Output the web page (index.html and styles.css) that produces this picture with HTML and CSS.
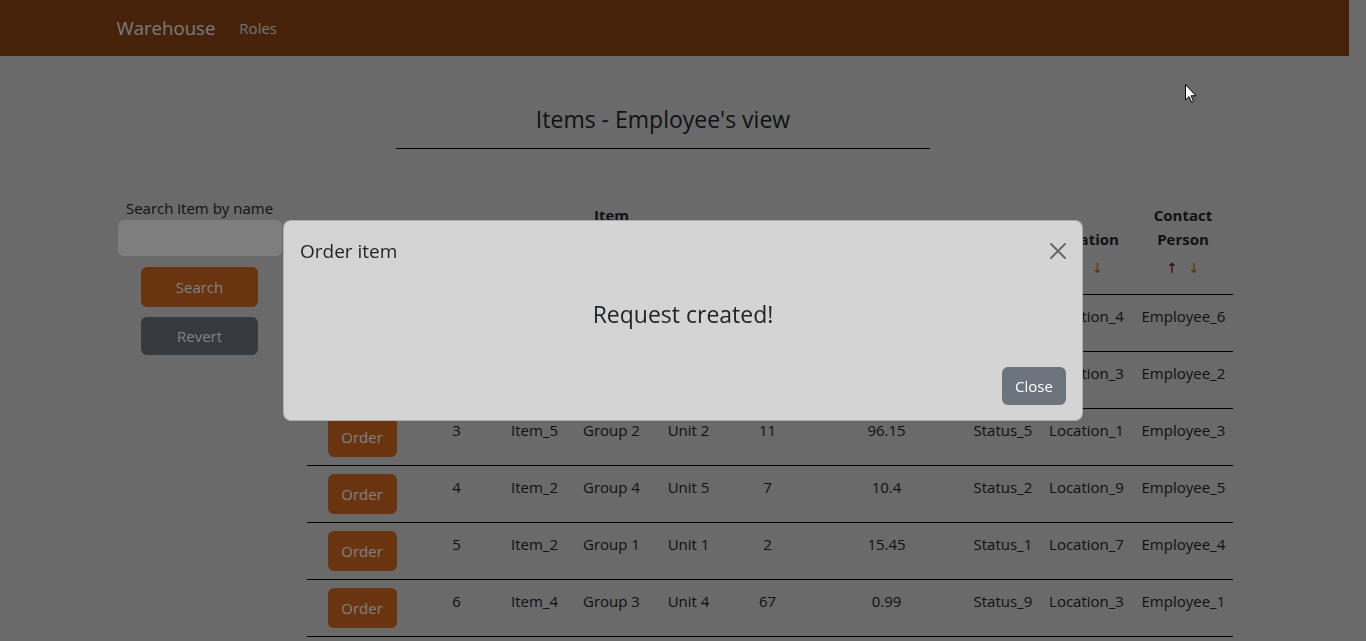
FILE: index.html
```html
<!DOCTYPE html>
<html lang="en">
<head>
<meta charset="utf-8">
<title>Warehouse</title>
<link rel="stylesheet" href="styles.css">
</head>
<body>
<nav class="navbar">
  <div class="container nav-inner">
    <span class="brand">Warehouse</span>
    <span class="nav-link">Roles</span>
  </div>
</nav>

<div class="container">
  <div class="title-wrap">
    <h3 class="page-title">Items - Employee's view</h3>
    <hr class="title-rule">
  </div>

  <div class="main">
    <aside class="side">
      <label class="search-label" for="q">Search item by name</label>
      <input id="q" class="search-input" type="text">
      <button class="btn btn-brown btn-search">Search</button>
      <button class="btn btn-gray btn-revert">Revert</button>
    </aside>

    <section class="content">
      <table class="items">
        <colgroup>
          <col class="c-order"><col class="c-no"><col class="c-name"><col class="c-group"><col class="c-unit"><col class="c-qty"><col class="c-price"><col class="c-status"><col class="c-loc"><col class="c-contact">
        </colgroup>
        <thead>
          <tr>
            <th></th>
            <th><div>No.</div><div class="sort"><span class="up">↑</span><span class="down">↓</span></div></th>
            <th><div>Name</div><div class="sort"><span class="up">↑</span><span class="down">↓</span></div></th>
            <th><div>Item Group</div><div class="sort"><span class="up">↑</span><span class="down">↓</span></div></th>
            <th><div>Unit</div><div class="sort"><span class="up">↑</span><span class="down">↓</span></div></th>
            <th><div>Quantity</div><div class="sort"><span class="up">↑</span><span class="down">↓</span></div></th>
            <th><div>Price without VAT</div><div class="sort"><span class="up">↑</span><span class="down">↓</span></div></th>
            <th><div>Status</div><div class="sort"><span class="up">↑</span><span class="down">↓</span></div></th>
            <th><div>Location</div><div class="sort"><span class="up">↑</span><span class="down">↓</span></div></th>
            <th><div>Contact Person</div><div class="sort"><span class="up">↑</span><span class="down">↓</span></div></th>
          </tr>
        </thead>
        <tbody>
          <tr><td><button class="btn btn-brown btn-order">Order</button></td><td>1</td><td>Item_1</td><td>Group 5</td><td>Unit 3</td><td>24</td><td>5.2</td><td>Status_3</td><td>Location_4</td><td>Employee_6</td></tr>
          <tr><td><button class="btn btn-brown btn-order">Order</button></td><td>2</td><td>Item_3</td><td>Group 1</td><td>Unit 1</td><td>9</td><td>32.5</td><td>Status_4</td><td>Location_3</td><td>Employee_2</td></tr>
          <tr><td><button class="btn btn-brown btn-order">Order</button></td><td>3</td><td>Item_5</td><td>Group 2</td><td>Unit 2</td><td>11</td><td>96.15</td><td>Status_5</td><td>Location_1</td><td>Employee_3</td></tr>
          <tr><td><button class="btn btn-brown btn-order">Order</button></td><td>4</td><td>Item_2</td><td>Group 4</td><td>Unit 5</td><td>7</td><td>10.4</td><td>Status_2</td><td>Location_9</td><td>Employee_5</td></tr>
          <tr><td><button class="btn btn-brown btn-order">Order</button></td><td>5</td><td>Item_2</td><td>Group 1</td><td>Unit 1</td><td>2</td><td>15.45</td><td>Status_1</td><td>Location_7</td><td>Employee_4</td></tr>
          <tr><td><button class="btn btn-brown btn-order">Order</button></td><td>6</td><td>Item_4</td><td>Group 3</td><td>Unit 4</td><td>67</td><td>0.99</td><td>Status_9</td><td>Location_3</td><td>Employee_1</td></tr>
        </tbody>
      </table>
    </section>
  </div>
</div>

<div class="backdrop"></div>

<div class="modal-wrap">
  <div class="modal-content">
    <div class="modal-header">
      <h5 class="modal-title">Order item</h5>
      <button class="btn-close" aria-label="Close">
        <svg viewBox="0 0 16 16" width="16" height="16"><path d="M.293.293a1 1 0 0 1 1.414 0L8 6.586 14.293.293a1 1 0 1 1 1.414 1.414L9.414 8l6.293 6.293a1 1 0 0 1-1.414 1.414L8 9.414l-6.293 6.293a1 1 0 0 1-1.414-1.414L6.586 8 .293 1.707a1 1 0 0 1 0-1.414z"/></svg>
      </button>
    </div>
    <div class="modal-body">
      <h4 class="modal-message">Request created!</h4>
    </div>
    <div class="modal-footer">
      <button class="btn btn-secondary">Close</button>
    </div>
  </div>
</div>

<svg class="cursor" viewBox="0 0 12 19" width="12" height="19"><path d="M0.5 0.5 L0.5 16 L4 12.6 L6.6 18.3 L8.6 17.4 L6.1 11.8 L11 11.8 Z" fill="#fff" stroke="#000" stroke-width="1"/></svg>
</body>
</html>
```

FILE: styles.css
```css
* { box-sizing: border-box; }

html, body { height: 100%; }

body {
  margin: 0;
  padding-right: 17px;
  overflow: hidden;
  background: #d4d4d4;
  color: #212529;
  font-family: "Open Sans", "Noto Sans", sans-serif;
  font-size: 16px;
  line-height: 1.5;
}

.container {
  width: 1140px;
  margin: 0 auto;
  padding: 0 12px;
}

/* navbar */
.navbar {
  height: 56px;
  background: #8b4513;
}
.nav-inner {
  display: flex;
  align-items: center;
  height: 56px;
}
.brand {
  font-size: 18.6px;
  color: #f2f2f2;
  margin-right: 16px;
  line-height: 30px;
}
.nav-link {
  padding: 8px;
  color: #e4e4e4;
  font-size: 15px;
}

/* title */
.title-wrap {
  width: 534px;
  margin-left: 279.5px;
  padding-top: 50px;
  text-align: center;
}
.page-title {
  margin: 0;
  font-size: 23px;
  font-weight: 500;
  line-height: 1.2;
  color: #212529;
}
.title-rule {
  margin: 14px 0 0;
  border: 0;
  border-top: 1px solid #000;
}

/* main */
.main {
  display: flex;
  gap: 24px;
  margin-top: 46px;
}
.side {
  width: 166px;
  flex: none;
  display: flex;
  flex-direction: column;
  align-items: center;
  padding-top: 1px;
}
.search-label {
  display: block;
  font-size: 15px;
  line-height: 24px;
}
.search-input {
  display: block;
  width: 164px;
  height: 36px;
  border: 0;
  border-radius: 6px;
  background: #fcfcfc;
  font: inherit;
}

.btn {
  font-family: inherit;
  font-size: 15px;
  line-height: 24px;
  border: 0;
  border-radius: 6px;
  color: #fff;
  padding: 6px 12px;
  cursor: pointer;
}
.btn-brown { background: #d2691e; }
.btn-gray { background: #6c757d; }
.btn-secondary { background: #6c757d; }

.btn-search {
  width: 117px;
  height: 40px;
  margin-top: 11px;
}
.btn-revert {
  width: 117px;
  height: 38px;
  margin-top: 10px;
}

.content {
  flex: 1;
  min-width: 0;
}

/* table */
.items {
  width: 926px;
  border-collapse: collapse;
  table-layout: fixed;
}
.c-order { width: 111px; }
.c-no { width: 78px; }
.c-name { width: 78px; }
.c-group { width: 76px; }
.c-unit { width: 78px; }
.c-qty { width: 80px; }
.c-price { width: 158px; }
.c-status { width: 74px; }
.c-loc { width: 94px; }
.c-contact { width: 99px; }

.items th,
.items td {
  padding: 8px;
  text-align: center;
  border-bottom: 1px solid #000;
  font-size: 15px;
}
.items th {
  vertical-align: bottom;
  font-weight: 700;
  line-height: 24px;
}
.items td {
  vertical-align: top;
  line-height: 24px;
}
.items td:not(:first-child) {
  padding-top: 9px;
}
.sort {
  display: flex;
  justify-content: center;
  align-items: center;
  gap: 10px;
  height: 35px;
  font-weight: 400;
  font-family: "DejaVu Sans", sans-serif;
  font-size: 14px;
}
.sort span {
  display: inline-block;
  width: 12px;
  text-align: center;
}
.sort .up { color: #7a0040; }
.sort .down { color: #c06a00; }

.btn-order {
  width: 69px;
  height: 40px;
  padding: 8px 12px;
}

/* modal */
.backdrop {
  position: fixed;
  inset: 0;
  background: rgba(0, 0, 0, 0.5);
  z-index: 10;
}
.modal-wrap {
  position: fixed;
  inset: 0;
  z-index: 20;
  display: flex;
  align-items: center;
  justify-content: center;
}
.modal-content {
  width: 800px;
  background: #d4d4d4;
  border: 1px solid rgba(0, 0, 0, 0.175);
  border-radius: 8px;
}
.modal-header {
  display: flex;
  align-items: center;
  padding: 15px 16px 16px;
}
.modal-title {
  margin: 0;
  font-size: 19px;
  font-weight: 500;
  line-height: 30px;
  flex: 1;
}
.btn-close {
  width: 32px;
  height: 32px;
  margin: -8px -8px -8px auto;
  padding: 8px;
  border: 0;
  background: transparent;
  opacity: 0.5;
  display: flex;
  align-items: center;
  justify-content: center;
}
.btn-close svg { display: block; fill: #000; }
.modal-body {
  padding: 16px;
  text-align: center;
}
.modal-message {
  margin: 0;
  font-size: 23px;
  font-weight: 500;
  line-height: 32px;
}
.modal-footer {
  display: flex;
  justify-content: flex-end;
  padding: 17px 12px 11px;
}
.modal-footer .btn {
  margin: 4px;
  height: 38px;
  width: 64px;
  padding: 6px 0;
}

.cursor {
  position: fixed;
  left: 1185px;
  top: 84px;
  z-index: 30;
}
```
